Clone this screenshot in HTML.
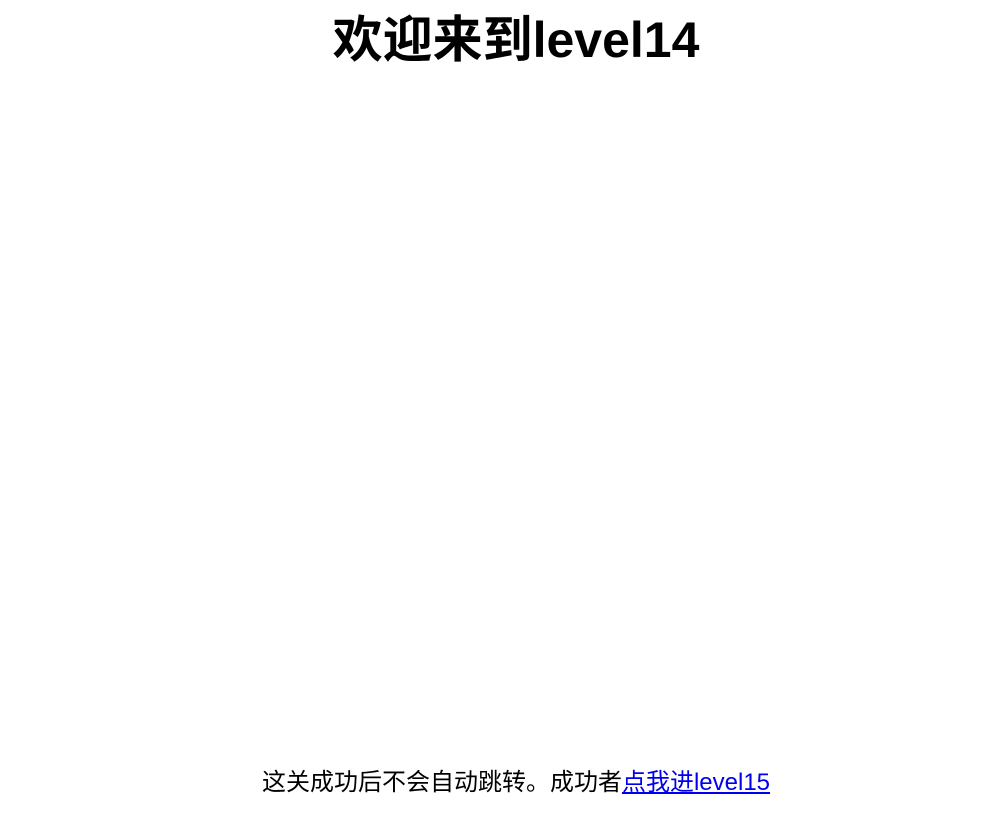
<!DOCTYPE html>
<html>
<head>
<meta charset="utf-8">
<style>
  html, body { margin:0; padding:0; background:#fff; width:989px; height:819px; overflow:hidden; }
  .c { position:absolute; left:0; width:1032px; text-align:center; color:#000; white-space:nowrap;
       font-family:"Liberation Sans","Noto Sans CJK SC","WenQuanYi Zen Hei",sans-serif; }
  h1 { margin:0; top:15px; font-size:50px; line-height:50px; font-weight:bold; }
  p { margin:0; top:770px; font-size:24px; line-height:26px; }
  a { color:#0000ee; text-decoration:underline; }
</style>
</head>
<body>
<h1 class="c">欢迎来到level14</h1>
<p class="c">这关成功后不会自动跳转。成功者<a href="#">点我进level15</a></p>
</body>
</html>
